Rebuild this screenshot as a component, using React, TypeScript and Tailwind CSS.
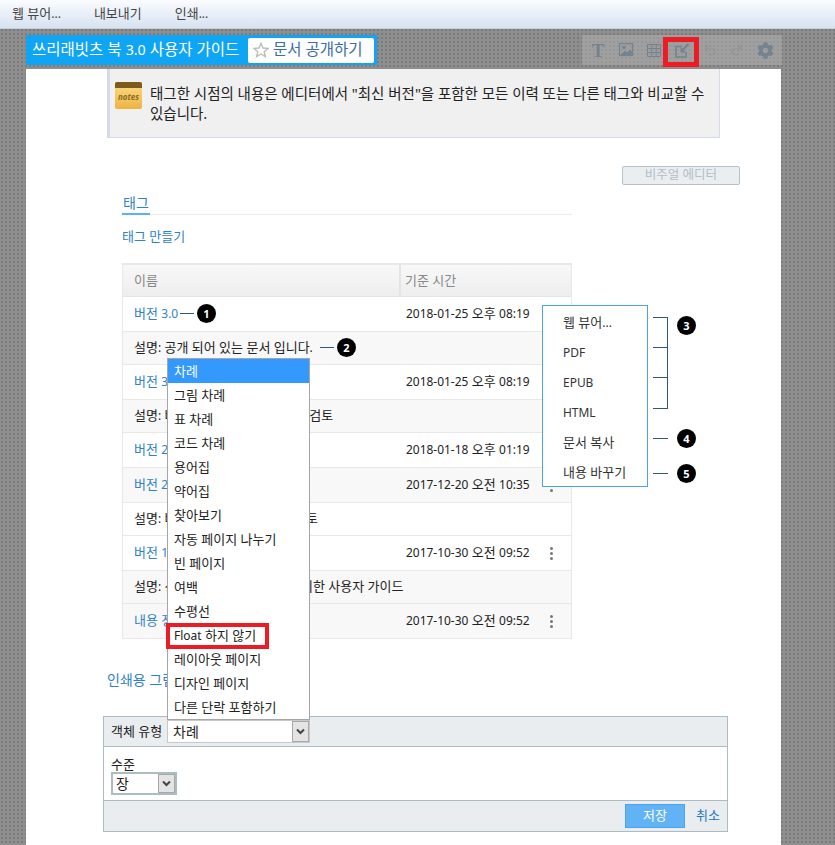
import { Undo2, Redo2 } from 'lucide-react';
import { FaCog } from 'react-icons/fa';

const font = { fontFamily: '"Noto Sans", "Noto Sans CJK KR", sans-serif' };

const rows = [
  { kind: 'tag', name: '버전 3.0', time: '2018-01-25 오후 08:19', h: 'h-[35px]', bg: 'bg-white' },
  { kind: 'desc', text: '설명: 공개 되어 있는 문서 입니다.', h: 'h-[33px]' },
  { kind: 'tag', name: '버전 3.0', time: '2018-01-25 오후 08:19', h: 'h-[35px]', bg: 'bg-white' },
  { kind: 'desc', text: '설명: 버전 3.0 출시 전 최종 내용 검토', h: 'h-[33px]' },
  { kind: 'tag', name: '버전 2.5', time: '2018-01-18 오후 01:19', h: 'h-[35px]', bg: 'bg-white' },
  { kind: 'tag', name: '버전 2.0', time: '2017-12-20 오전 10:35', h: 'h-[35px]', bg: 'bg-[#f8f8f8]', more: true },
  { kind: 'desc', text: '설명: 버전 2.0 출시 전 최종본 검토', h: 'h-[33px]', white: true },
  { kind: 'tag', name: '버전 1.0', time: '2017-10-30 오전 09:52', h: 'h-[35px]', bg: 'bg-white', more: true },
  { kind: 'desc', text: '설명: 신규 및 기존 독자 모두를 위한 사용자 가이드', h: 'h-[33px]' },
  { kind: 'tag', name: '내용 정리', time: '2017-10-30 오전 09:52', h: 'h-[34px]', bg: 'bg-[#f8f8f8]', more: true },
];

const options = ['차례', '그림 차례', '표 차례', '코드 차례', '용어집', '약어집', '찾아보기', '자동 페이지 나누기', '빈 페이지', '여백', '수평선', 'Float 하지 않기', '레이아웃 페이지', '디자인 페이지', '다른 단락 포함하기'];

const menuItems = ['웹 뷰어...', 'PDF', 'EPUB', 'HTML', '문서 복사', '내용 바꾸기'];

// Latin and digits sit a bit smaller than the hangul next to them
function Tx({ children }: { children: string }) {
  return (
    <span>
      {children.split(/([A-Za-z0-9.:\-]+)/).map((part, i) =>
        i % 2 === 1 ? <span key={i} className="text-[0.92em]">{part}</span> : part,
      )}
    </span>
  );
}

function Badge({ n }: { n: number }) {
  return (
    <span className="flex h-[19px] w-[19px] shrink-0 items-center justify-center rounded-full bg-black text-[11px] font-bold leading-none text-white">
      {n}
    </span>
  );
}

function MoreDots() {
  return (
    <span className="flex flex-col gap-[2px]">
      <i className="h-[3px] w-[3px] rounded-full bg-[#777]" />
      <i className="h-[3px] w-[3px] rounded-full bg-[#777]" />
      <i className="h-[3px] w-[3px] rounded-full bg-[#777]" />
    </span>
  );
}

function SelectArrow({ className }: { className: string }) {
  return (
    <span className={`flex items-center justify-center border border-[#a8a8a8] bg-[#e4e4e4] ${className}`}>
      <svg width="9" height="7" viewBox="0 0 9 7" fill="none" stroke="#444" strokeWidth="2">
        <path d="M1 1.5 4.5 5 8 1.5" />
      </svg>
    </span>
  );
}

function Toolbar() {
  return (
    <div className="flex h-[30px] w-[200px] items-center justify-between bg-[#aaaaaa]/60 px-[8px] text-[#75838f]">
      <span className="w-[16px] text-center text-[19px] font-bold leading-none" style={{ fontFamily: '"Liberation Serif", serif' }}>T</span>
      <svg width="15" height="14" viewBox="0 0 15 14" fill="none" stroke="currentColor">
        <rect x=".5" y=".5" width="13" height="12" strokeWidth="1.3" />
        <path d="M2 12 6 8l2 2 3-3 2 3v2z" fill="currentColor" />
        <circle cx="5" cy="4.5" r="1.3" fill="currentColor" />
      </svg>
      <svg width="15" height="13" viewBox="0 0 15 13" fill="none" stroke="currentColor">
        <path d="M.5.5h13v12H.5zM.5 4.5h13M.5 8.500h13M4.800.5v12M9.200.5v12" />
      </svg>
      <svg width="15" height="15" viewBox="0 0 15 15" fill="none" stroke="currentColor" strokeWidth="1.600">
        <path d="M7 3.500H1v10.500h10V9" />
        <path d="M13.500 1 7 7.500" strokeWidth="2.200" />
        <path d="M5.500 4v5.500H11z" fill="currentColor" stroke="none" />
      </svg>
      <Undo2 size={14} strokeWidth={2} className="opacity-30" />
      <Redo2 size={14} strokeWidth={2} className="opacity-30" />
      <FaCog size={17} />
    </div>
  );
}

export default function App() {
  return (
    <div className="relative h-[845px] w-[835px] overflow-hidden bg-[#8e8e8e] bg-[radial-gradient(#7c7c7c_1px,transparent_1px)] bg-[length:4px_4px] text-[13px] text-[#222]" style={font}>
      {/* Top menu */}
      <div className="flex h-[29px] items-center gap-[33px] border-b border-[#c5d0de] bg-gradient-to-b from-[#fafcff] to-[#d7e2f0] pl-[12px] text-[#444]">
        <Tx>웹 뷰어...</Tx>
        <span>내보내기</span>
        <Tx>인쇄...</Tx>
      </div>

      {/* Title row */}
      <div className="flex h-[40px] items-start justify-between pl-[26px] pr-[53px]">
        <div className="mt-[6px] flex h-[30px] w-[351px] items-center justify-between whitespace-nowrap bg-[#0ea5f5] pl-[6px] pr-[3px] text-[15.5px] text-white">
          <Tx>쓰리래빗츠 북 3.0 사용자 가이드</Tx>
          <span className="flex h-[25px] w-[126px] items-center gap-[4px] rounded-[2px] bg-white pl-[5px] text-[#3a6ea5]">
            <svg width="16" height="16" viewBox="0 0 24 24" fill="#fff" stroke="#bbb" strokeWidth="2">
              <path d="m12 2 3 7 7.500.6-5.700 4.900 1.800 7.300L12 18l-6.600 3.800 1.800-7.300L1.500 9.600 9 9z" />
            </svg>
            문서 공개하기
          </span>
        </div>
        <div className="mt-[6px]">
          <Toolbar />
        </div>
      </div>

      {/* Page */}
      <div className="ml-[26px] h-[776px] w-[755px] bg-white pl-[81px]">
        {/* Note */}
        <div className="flex h-[69px] w-[613px] gap-[8px] border-r border-b border-l-[3px] border-[#d5dbe6] bg-[#f0f0f0] pl-[5px] pt-[13px] text-[14.5px]">
          <span className="flex h-[27px] w-[27px] shrink-0 flex-col overflow-hidden rounded-[2px] bg-gradient-to-b from-[#fbdd84] to-[#eeb33f]">
            <span className="h-[6px] bg-[#7d5a1e]" />
            <span className="text-center text-[8px] font-bold italic leading-[18px] text-[#8a6a2a]">notes</span>
          </span>
          <p className="mt-[1px] w-[562px] leading-[20px]">
            태그한 시점의 내용은 에디터에서 "최신 버전"을 포함한 모든 이력 또는 다른 태그와 비교할 수 있습니다.
          </p>
        </div>

        {/* Visual editor */}
        <div className="mt-[28px] flex w-[633px] justify-end">
          <span className="flex h-[19px] w-[118px] items-center justify-center rounded-[2px] border border-[#b5c0c9] bg-[#ebeef1] text-[12.500px] text-[#b3bcc7]">비주얼 에디터</span>
        </div>

        {/* Tag tab */}
        <div className="ml-[15px] mt-[8px] h-[22px] w-[450px] border-b border-[#e6eef4]">
          <span className="inline-block h-[22px] border-b-2 border-[#5ab2f0] px-px text-[14px] leading-[20px] text-[#2f82c7]">태그</span>
        </div>
        <p className="ml-[15px] mt-[12px] leading-[18px] text-[#2f82c7]">태그 만들기</p>

        {/* Tag table */}
        <div className="ml-[15px] mt-[18px] w-[450px] border border-t-2 border-[#e8e8e8]">
          <div className="flex h-[32px] items-center border-b border-[#e4e4e4] bg-gradient-to-b from-[#f8f8f8] to-[#eeeeee] text-[#888]">
            <span className="w-[278px] border-r-2 border-[#e4e4e4] pl-[11px] leading-[31px]">이름</span>
            <span className="pl-[4px]">기준 시간</span>
          </div>
          {rows.map((row, i) =>
            row.kind === 'tag' ? (
              <div key={i} className={`flex items-center border-b border-[#e8e8e8] last:border-b-0 ${row.h} ${row.bg}`}>
                <span className="w-[272px] pl-[11px] text-[#2f82c7]"><Tx>{row.name!}</Tx></span>
                <span className="w-[155px] pl-[11px] whitespace-nowrap"><Tx>{row.time!}</Tx></span>
                {row.more && <MoreDots />}
              </div>
            ) : (
              <div key={i} className={`flex items-center whitespace-nowrap border-b border-[#e8e8e8] pl-[11px] ${row.h} ${row.white ? 'bg-white' : 'bg-[#f8f8f8]'}`}>
                <Tx>{row.text!}</Tx>
              </div>
            ),
          )}
        </div>

        <p className="mt-[32px] text-[14px] leading-[18px] text-[#2f82c7]">인쇄용 그림 목록</p>

        {/* Object form */}
        <div className="-ml-[4px] mt-[27px] w-[625px] border border-[#adbbc3]">
          <div className="flex h-[30px] items-center gap-[5px] border-b border-[#adbbc3] bg-[#e9edf0] pl-[7px]">
            <span>객체 유형</span>
          </div>
          <div className="h-[53px] pl-[7px] pt-[9px]">
            <p className="leading-[16px]">수준</p>
            <div className="flex h-[23px] w-[66px] border-2 border-[#adbbc3] bg-white pl-[3px] text-[14px] leading-[19px]">
              <span className="flex-1">장</span>
              <SelectArrow className="w-[17px]" />
            </div>
          </div>
          <div className="flex h-[31px] items-center justify-end gap-[11px] border-t border-[#adbbc3] bg-[#e9edf0] pr-[7px]">
            <span className="flex h-[24px] w-[60px] items-center justify-center border border-[#49a5f1] bg-[#62b3f6] text-white">저장</span>
            <span className="text-[#1f74c4]">취소</span>
          </div>
        </div>
      </div>

      {/* Object type dropdown */}
      <div className="absolute left-[167px] top-[358px] w-[143px] border border-[#a5a5a5] bg-white">
        {options.map((o, i) => (
          <div key={o} className={`h-[24px] pl-[6px] leading-[25px] ${i === 0 ? 'bg-[#3399ff] text-white' : ''}`}><Tx>{o}</Tx></div>
        ))}
      </div>
      <div className="absolute left-[167px] top-[720px] flex h-[23px] w-[143px] border border-[#c8c8c8] bg-white pl-[5px] text-[14px] leading-[21px]">
        <span className="flex-1">차례</span>
        <SelectArrow className="w-[17px]" />
      </div>
      <div className="absolute left-[166px] top-[623px] h-[26px] w-[103px] border-[4px] border-[#ed1c24]" />

      {/* Red highlight on toolbar */}
      <div className="absolute left-[663px] top-[37px] h-[30px] w-[36px] border-[5px] border-[#ed1c24]" />

      {/* Row menu */}
      <div className="absolute left-[542px] top-[305px] h-[182px] w-[106px] border border-[#4aa3e8] bg-white pl-[20px] pt-[1px]">
        {menuItems.map((m) => (
          <div key={m} className="h-[30px] leading-[30px] text-[#333]"><Tx>{m}</Tx></div>
        ))}
      </div>

      {/* Callouts */}
      <div className="absolute left-[180px] top-[304px] flex items-center gap-[3px]">
        <span className="h-px w-[14px] bg-[#33567e]" />
        <Badge n={1} />
      </div>
      <div className="absolute left-[320px] top-[338px] flex items-center gap-[3px]">
        <span className="h-px w-[14px] bg-[#33567e]" />
        <Badge n={2} />
      </div>
      <div className="absolute left-[653px] top-[317px] h-[92px] w-[15px] border-y border-r border-[#33567e]">
        <span className="absolute left-0 top-[29px] h-px w-[14px] bg-[#33567e]" />
        <span className="absolute left-0 top-[59px] h-px w-[14px] bg-[#33567e]" />
      </div>
      <div className="absolute left-[677px] top-[316px]"><Badge n={3} /></div>
      <div className="absolute left-[653px] top-[429px] flex items-center gap-[9px]">
        <span className="h-px w-[15px] bg-[#33567e]" />
        <Badge n={4} />
      </div>
      <div className="absolute left-[653px] top-[464px] flex items-center gap-[9px]">
        <span className="h-px w-[15px] bg-[#33567e]" />
        <Badge n={5} />
      </div>
    </div>
  );
}
